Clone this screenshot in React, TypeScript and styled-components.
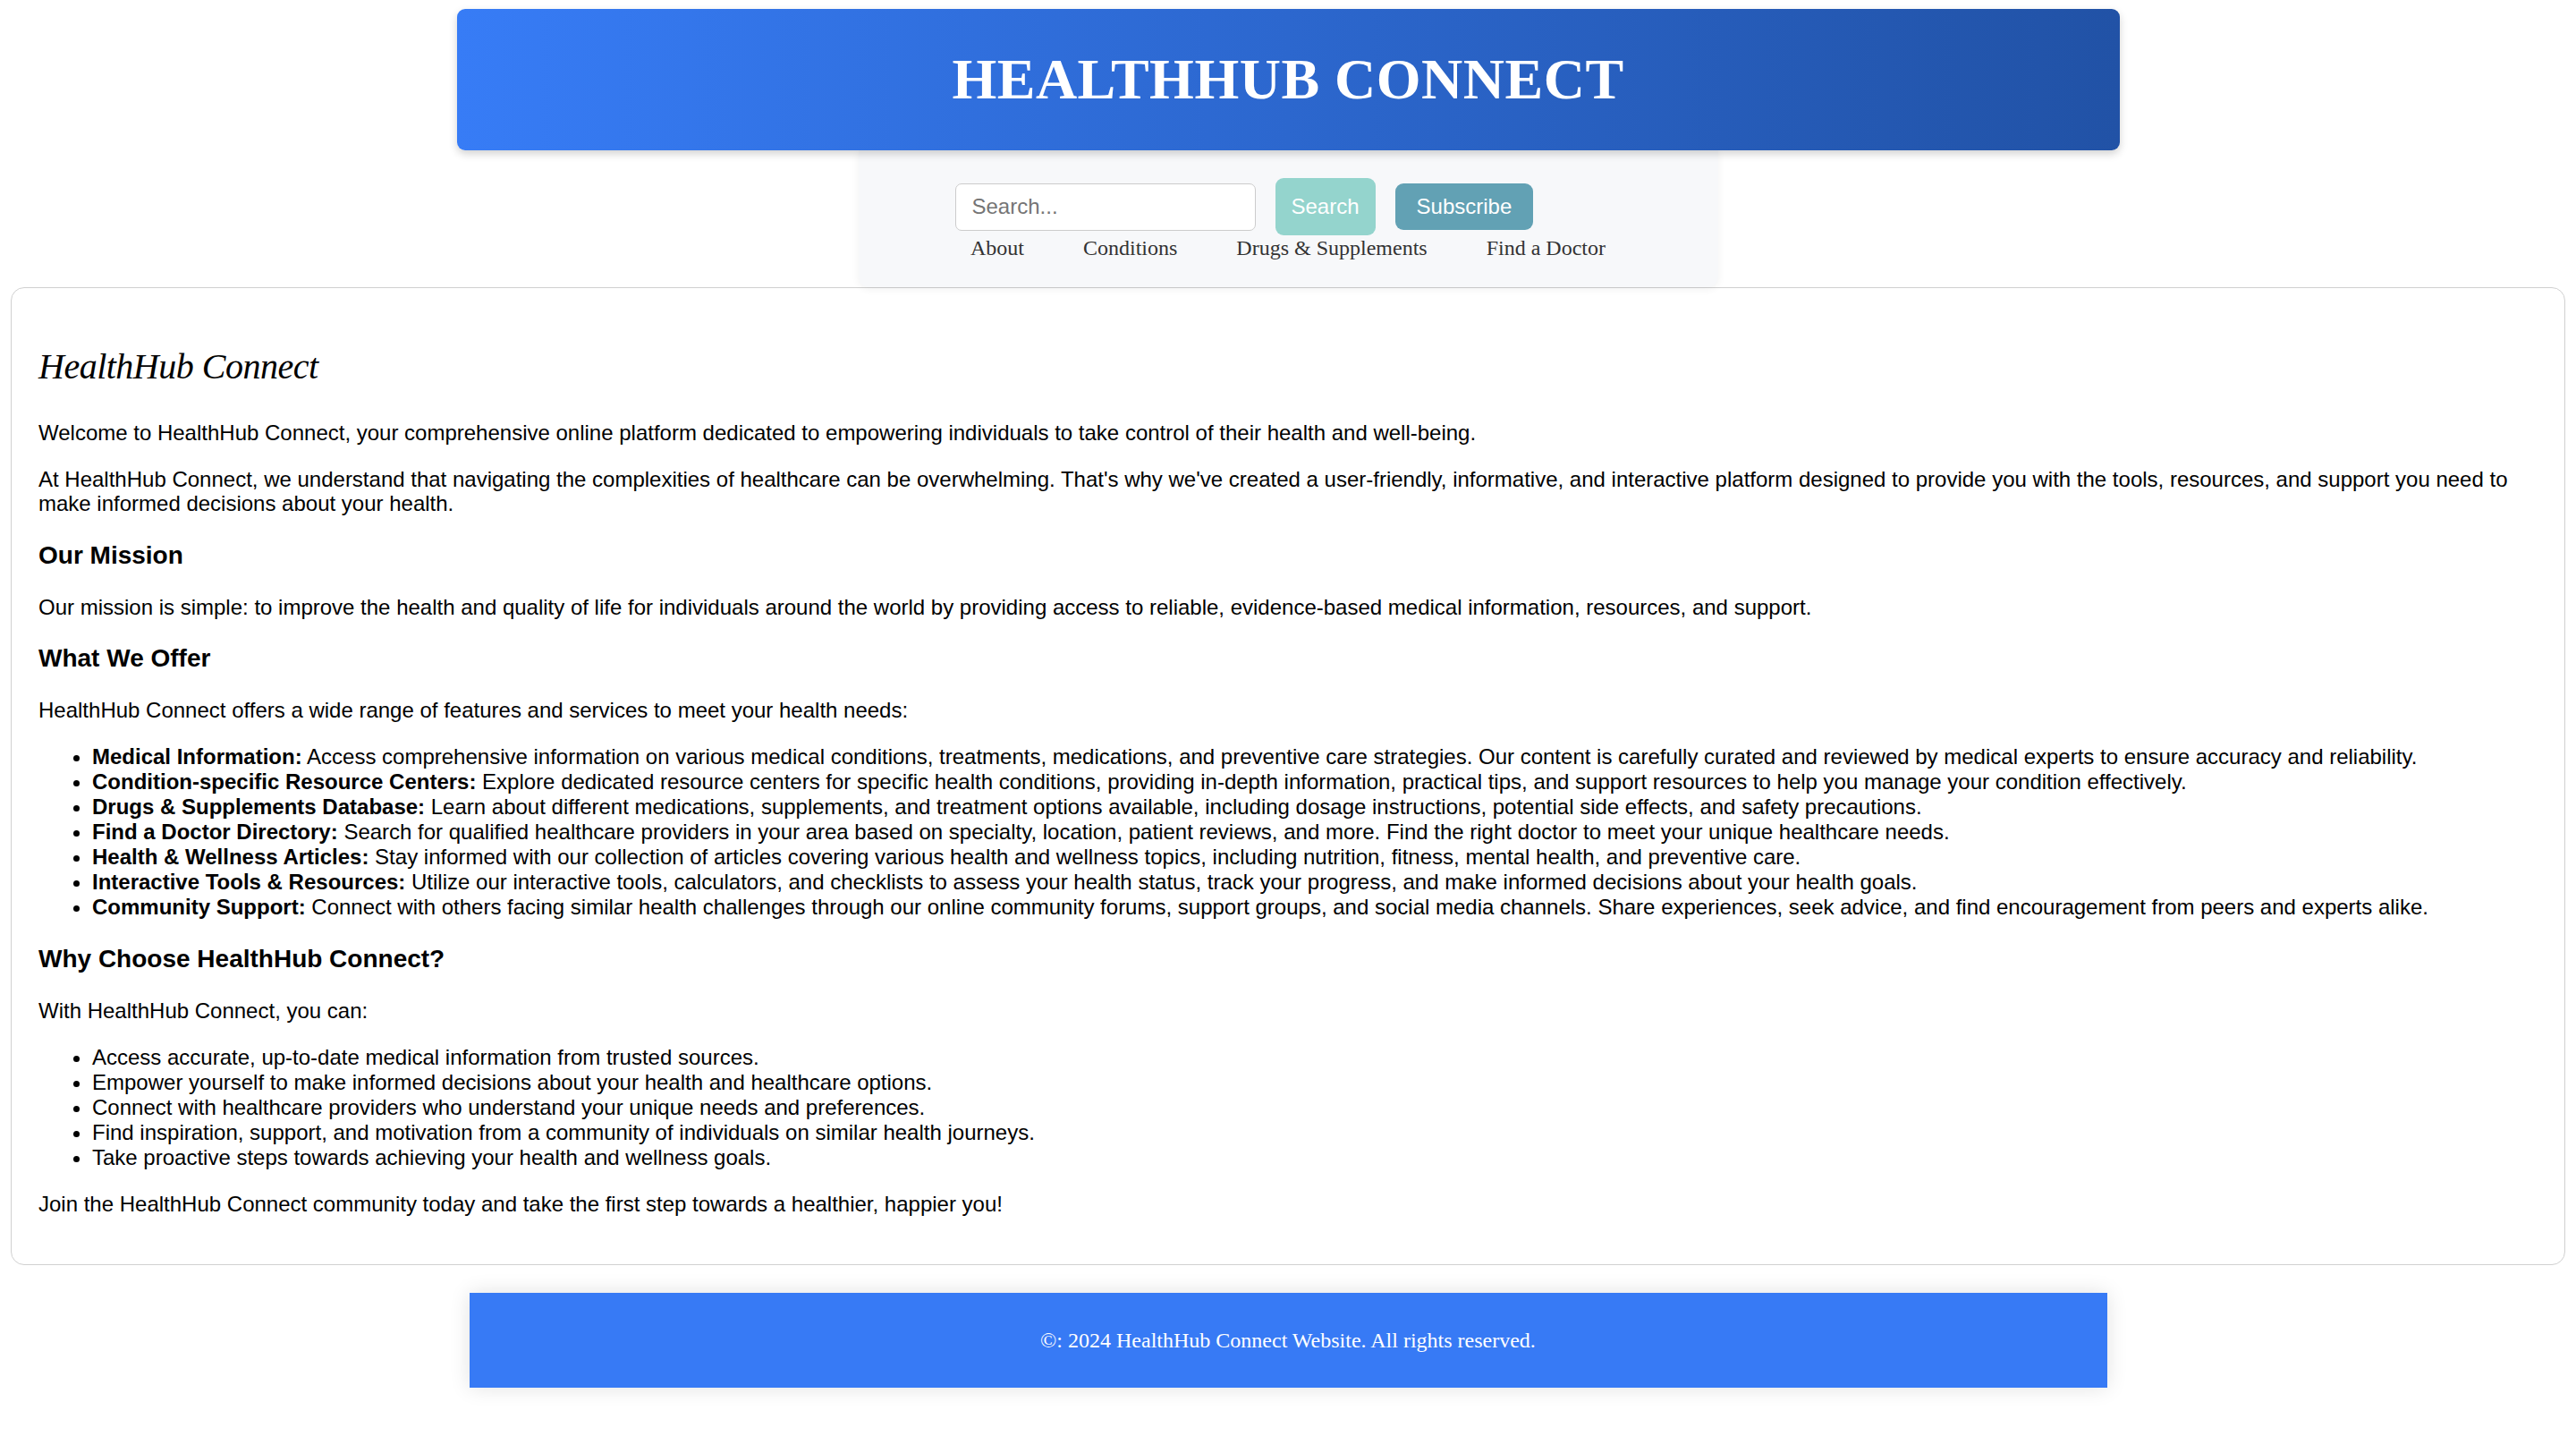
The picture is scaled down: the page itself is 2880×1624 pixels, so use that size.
import React from "react";
import styled, { createGlobalStyle } from "styled-components";

const GlobalStyle = createGlobalStyle`
  html, body {
    margin: 0;
    padding: 0;
    background: #ffffff;
  }
  body {
    font-family: "Liberation Sans", Arial, sans-serif;
    font-size: 24px;
    color: #000;
  }
`;

const Page = styled.div`
  display: flex;
  flex-direction: column;
  padding-bottom: 72px;
`;

const Header = styled.header`
  width: 1859px;
  height: 158px;
  margin: 10px auto 0;
  border-radius: 9px;
  background: linear-gradient(to right, #377cf6, #2152a6);
  box-shadow: 0 4px 10px rgba(0, 0, 0, 0.18);
  display: flex;
  align-items: center;
  justify-content: center;
  position: relative;
  z-index: 2;
`;

const Title = styled.h1`
  margin: 0;
  color: #ffffff;
  font-family: "Liberation Serif", "Times New Roman", serif;
  font-weight: 700;
  font-size: 64px;
  letter-spacing: 0.5px;
`;

const NavPanel = styled.nav`
  width: 961px;
  margin: 0 auto;
  padding: 31px 0 30px;
  background: #f7f8fa;
  border-radius: 0 0 12px 12px;
  box-shadow: 0 2px 10px rgba(0, 0, 0, 0.06);
  display: flex;
  flex-direction: column;
  position: relative;
  z-index: 1;
`;

const SearchRow = styled.div`
  display: flex;
  align-items: center;
  padding-left: 108px;
  height: 64px;
`;

const SearchInput = styled.input`
  width: 336px;
  height: 53px;
  box-sizing: border-box;
  padding: 12px 18px;
  border: 1.5px solid #cccccc;
  border-radius: 7px;
  background: #ffffff;
  font-family: "Liberation Sans", Arial, sans-serif;
  font-size: 24px;
  color: #333;
  outline: none;
  &::placeholder {
    color: #757575;
  }
`;

const Button = styled.button<{ $tone: "light" | "dark" }>`
  margin-left: 22px;
  border: none;
  border-radius: 9px;
  color: #ffffff;
  font-family: "Liberation Sans", Arial, sans-serif;
  font-size: 24px;
  line-height: 28px;
  cursor: pointer;
  background: ${(p) => (p.$tone === "light" ? "#94d4cd" : "#62a1b4")};
  padding: ${(p) => (p.$tone === "light" ? "18px 18px" : "12px 24px")};
`;

const Links = styled.div`
  display: flex;
  justify-content: center;
`;

const NavLink = styled.a`
  margin: 0 33px;
  font-family: "Liberation Serif", "Times New Roman", serif;
  font-size: 24px;
  line-height: 28px;
  color: #333333;
  text-decoration: none;
`;

const Card = styled.main`
  margin: 0 12px;
  padding: 30px;
  border: 1.5px solid #d0d0d0;
  border-radius: 15px;
`;

const BrandHeading = styled.h2`
  margin: 30px 0 32px;
  font-family: "Liberation Serif", "Times New Roman", serif;
  font-style: italic;
  font-weight: 400;
  font-size: 40px;
  line-height: 56px;
  letter-spacing: -0.5px;
`;

const Paragraph = styled.p`
  margin: 24px 0;
  line-height: 27.6px;
`;

const SectionTitle = styled.h3`
  margin: 28px 0;
  font-size: 28px;
  line-height: 32px;
  font-weight: 700;
`;

const List = styled.ul`
  margin: 24px 0;
  padding-left: 60px;
`;

const Item = styled.li`
  line-height: 28px;
`;

const Footer = styled.footer`
  width: 1831px;
  height: 106px;
  margin: 31px auto 0;
  background: #377af5;
  box-shadow: 0 0 22px rgba(0, 0, 0, 0.12);
  display: flex;
  align-items: center;
  justify-content: center;
  color: #ffffff;
  font-family: "Liberation Serif", "Times New Roman", serif;
  font-size: 24px;
`;

const offers: [string, string][] = [
  [
    "Medical Information:",
    "Access comprehensive information on various medical conditions, treatments, medications, and preventive care strategies. Our content is carefully curated and reviewed by medical experts to ensure accuracy and reliability.",
  ],
  [
    "Condition-specific Resource Centers:",
    "Explore dedicated resource centers for specific health conditions, providing in-depth information, practical tips, and support resources to help you manage your condition effectively.",
  ],
  [
    "Drugs & Supplements Database:",
    "Learn about different medications, supplements, and treatment options available, including dosage instructions, potential side effects, and safety precautions.",
  ],
  [
    "Find a Doctor Directory:",
    "Search for qualified healthcare providers in your area based on specialty, location, patient reviews, and more. Find the right doctor to meet your unique healthcare needs.",
  ],
  [
    "Health & Wellness Articles:",
    "Stay informed with our collection of articles covering various health and wellness topics, including nutrition, fitness, mental health, and preventive care.",
  ],
  [
    "Interactive Tools & Resources:",
    "Utilize our interactive tools, calculators, and checklists to assess your health status, track your progress, and make informed decisions about your health goals.",
  ],
  [
    "Community Support:",
    "Connect with others facing similar health challenges through our online community forums, support groups, and social media channels. Share experiences, seek advice, and find encouragement from peers and experts alike.",
  ],
];

const reasons = [
  "Access accurate, up-to-date medical information from trusted sources.",
  "Empower yourself to make informed decisions about your health and healthcare options.",
  "Connect with healthcare providers who understand your unique needs and preferences.",
  "Find inspiration, support, and motivation from a community of individuals on similar health journeys.",
  "Take proactive steps towards achieving your health and wellness goals.",
];

export default function App() {
  return (
    <>
      <GlobalStyle />
      <Page>
        <Header>
          <Title>HEALTHHUB CONNECT</Title>
        </Header>
        <NavPanel>
          <SearchRow>
            <SearchInput placeholder="Search..." />
            <Button $tone="light">Search</Button>
            <Button $tone="dark">Subscribe</Button>
          </SearchRow>
          <Links>
            <NavLink href="#">About</NavLink>
            <NavLink href="#">Conditions</NavLink>
            <NavLink href="#">Drugs &amp; Supplements</NavLink>
            <NavLink href="#">Find a Doctor</NavLink>
          </Links>
        </NavPanel>
        <Card>
          <BrandHeading>HealthHub Connect</BrandHeading>
          <Paragraph>
            Welcome to HealthHub Connect, your comprehensive online platform dedicated to empowering
            individuals to take control of their health and well-being.
          </Paragraph>
          <Paragraph>
            At HealthHub Connect, we understand that navigating the complexities of healthcare can be
            overwhelming. That's why we've created a user-friendly, informative, and interactive platform
            designed to provide you with the tools, resources, and support you need to make informed
            decisions about your health.
          </Paragraph>
          <SectionTitle>Our Mission</SectionTitle>
          <Paragraph>
            Our mission is simple: to improve the health and quality of life for individuals around the
            world by providing access to reliable, evidence-based medical information, resources, and
            support.
          </Paragraph>
          <SectionTitle>What We Offer</SectionTitle>
          <Paragraph>HealthHub Connect offers a wide range of features and services to meet your health needs:</Paragraph>
          <List>
            {offers.map(([label, text]) => (
              <Item key={label}>
                <strong>{label}</strong> {text}
              </Item>
            ))}
          </List>
          <SectionTitle>Why Choose HealthHub Connect?</SectionTitle>
          <Paragraph>With HealthHub Connect, you can:</Paragraph>
          <List>
            {reasons.map((r) => (
              <Item key={r}>{r}</Item>
            ))}
          </List>
          <Paragraph>
            Join the HealthHub Connect community today and take the first step towards a healthier,
            happier you!
          </Paragraph>
        </Card>
        <Footer>©: 2024 HealthHub Connect Website. All rights reserved.</Footer>
      </Page>
    </>
  );
}
